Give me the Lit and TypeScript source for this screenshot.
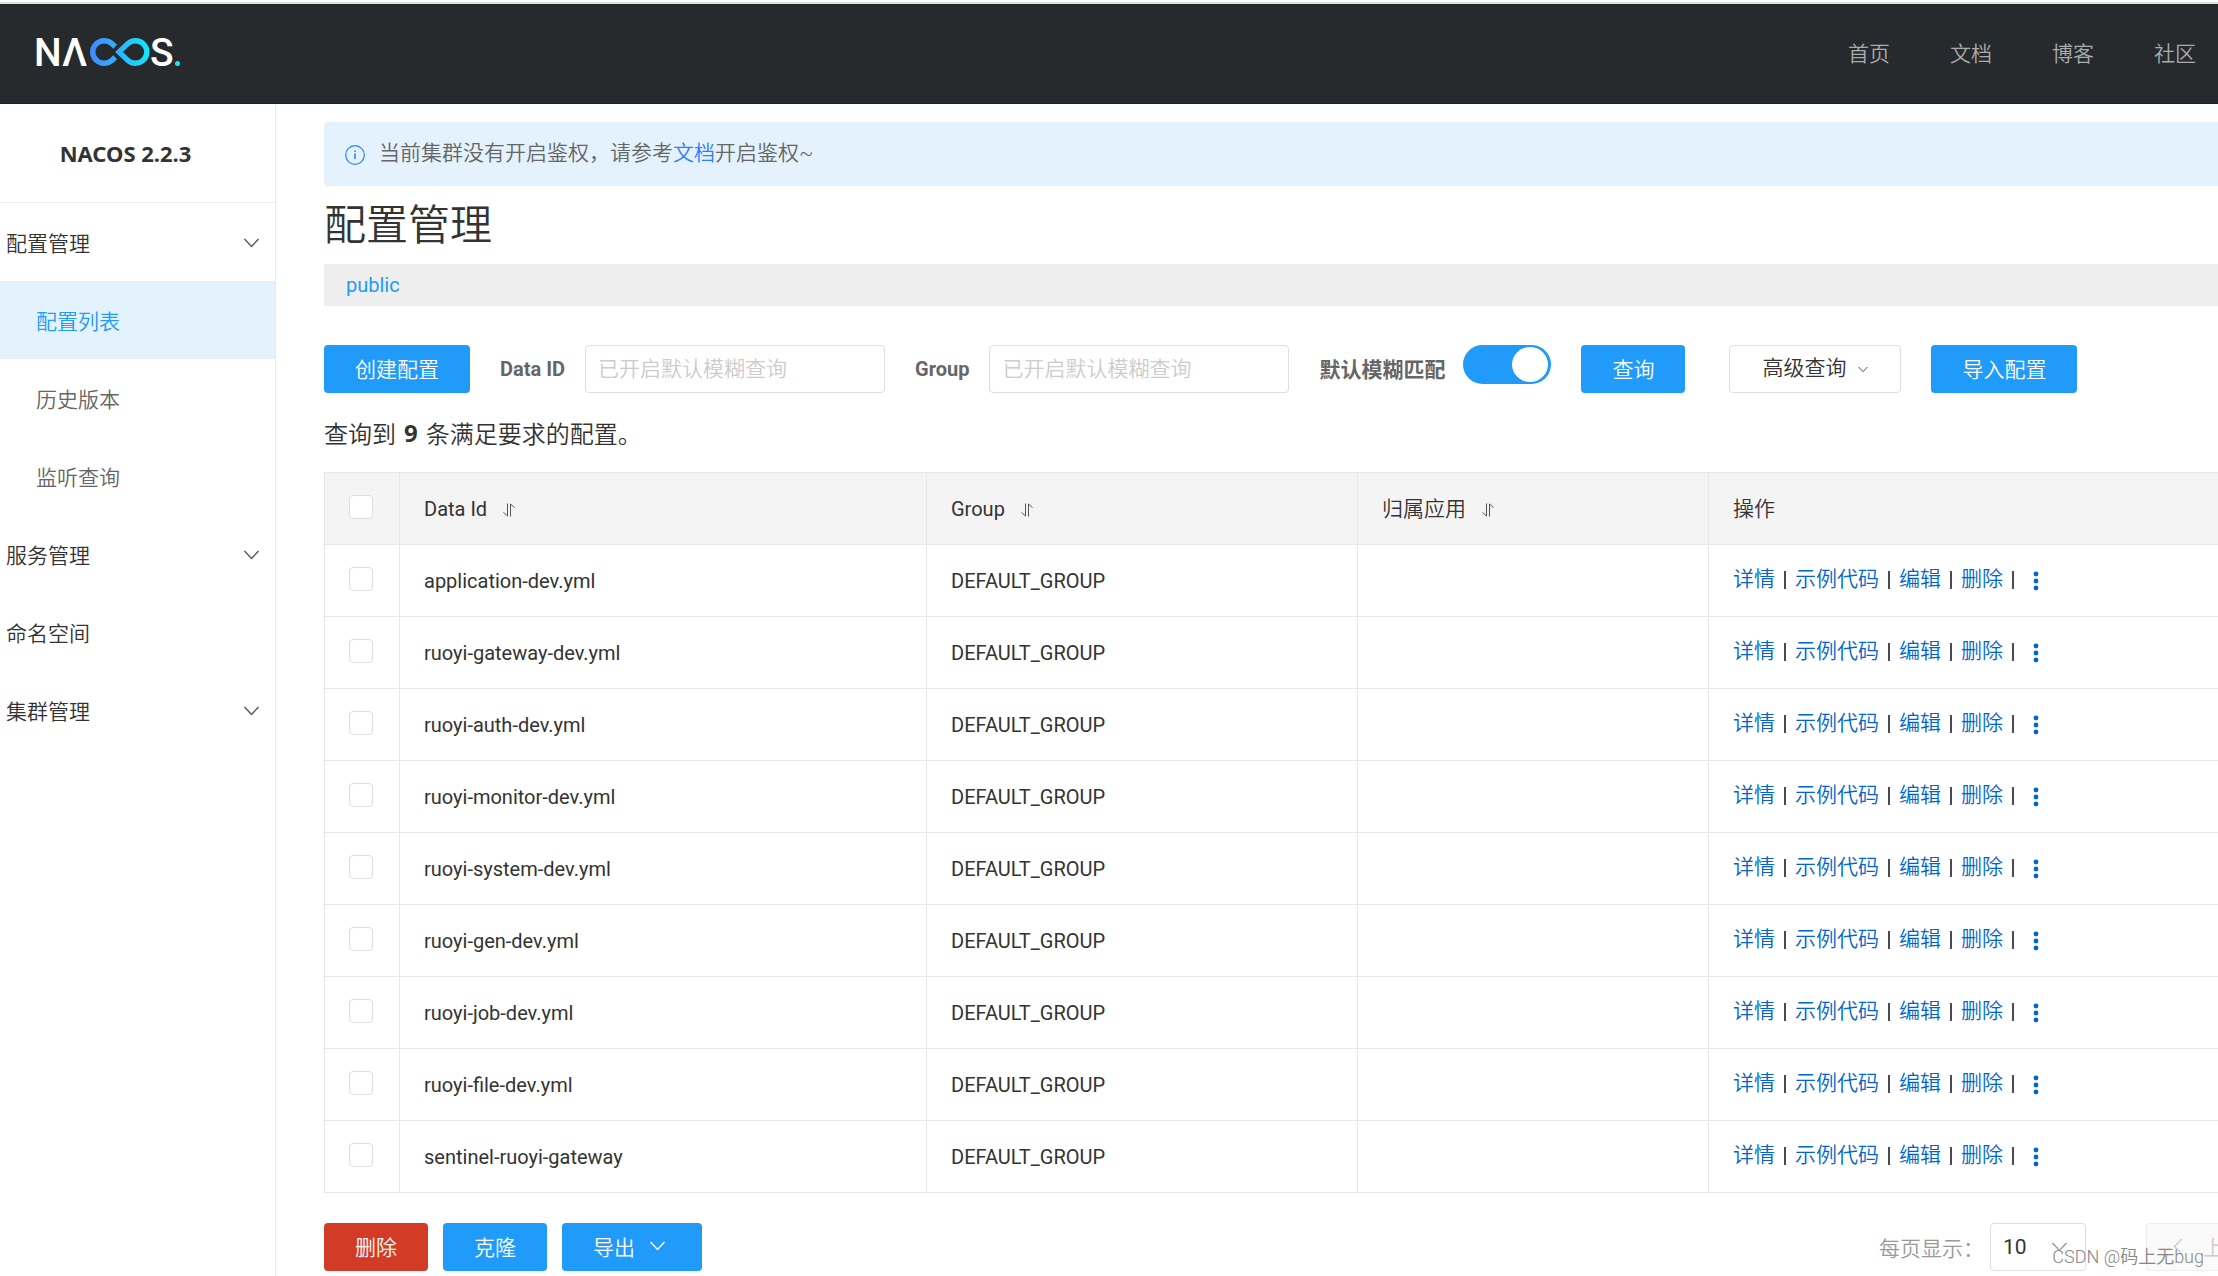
import { LitElement, html, css, svg } from "lit";
import { customElement, property, state } from "lit/decorators.js";
import { classMap } from "lit/directives/class-map.js";

const chevronDown = (size: string) => html`
  <svg class="chevron ${size}" viewBox="0 0 16 10" aria-hidden="true">
    <path d="M1 1 L8 8.5 L15 1" fill="none" stroke="currentColor" stroke-width="1.4" />
  </svg>
`;

const sortIcon = html`
  <svg class="sort" viewBox="0 0 12 14" aria-hidden="true">
    <path d="M0.5 9.5 L4.5 13 V0.5 M7.5 13.5 V1 L11.5 4.5" fill="none" stroke="currentColor" stroke-width="1" />
  </svg>
`;

const dots = [3, 10, 17].map((y) => svg`<circle cx="3" cy=${y} r="2.4" />`);

interface MenuEntry {
  label: string;
  expandable?: boolean;
  child?: boolean;
  active?: boolean;
}

const MENU: MenuEntry[] = [
  { label: "配置管理", expandable: true },
  { label: "配置列表", child: true, active: true },
  { label: "历史版本", child: true },
  { label: "监听查询", child: true },
  { label: "服务管理", expandable: true },
  { label: "命名空间" },
  { label: "集群管理", expandable: true },
];

const CONFIGS = [
  "application-dev.yml",
  "ruoyi-gateway-dev.yml",
  "ruoyi-auth-dev.yml",
  "ruoyi-monitor-dev.yml",
  "ruoyi-system-dev.yml",
  "ruoyi-gen-dev.yml",
  "ruoyi-job-dev.yml",
  "ruoyi-file-dev.yml",
  "sentinel-ruoyi-gateway",
];

@customElement("nacos-header")
class NacosHeader extends LitElement {
  static styles = css`
    :host {
      display: block;
      border-top: 2px solid #fff;
    }
    .bar {
      display: flex;
      align-items: center;
      justify-content: space-between;
      box-sizing: border-box;
      height: 102px;
      padding: 0 22px 0 36px;
      background: #262a2d;
      border-top: 2px solid #dfe3dd;
      border-bottom: 1px solid #231d26;
    }
    .logo {
      display: block;
      width: 144px;
      height: 28px;
      overflow: visible;
      margin-bottom: 4px;
    }
    .wordmark {
      font: 500 39px Roboto, sans-serif;
      fill: #fff;
    }
    nav {
      display: flex;
      gap: 60px;
    }
    .link {
      color: #a9abac;
      font-size: 21px;
      line-height: 32px;
      text-decoration: none;
    }
  `;

  render() {
    return html`
      <header class="bar">
        <svg class="logo" viewBox="0 0 144 28" role="img" aria-label="NACOS.">
          <defs>
            <linearGradient id="loop" gradientUnits="userSpaceOnUse" x1="54" y1="0" x2="113" y2="0">
              <stop offset="0" stop-color="#4289ff" />
              <stop offset="0.5" stop-color="#2fb4fb" />
              <stop offset="1" stop-color="#14e6f6" />
            </linearGradient>
          </defs>
          <text class="wordmark" x="-2" y="28">N</text>
          <text class="wordmark" x="26" y="28">Λ</text>
          <path
            d="M79.2 8.8 L76 5.7 A11.5 11.3 0 1 0 76 22.3 L79.2 19.2"
            fill="none" stroke="url(#loop)" stroke-width="5.4"
          />
          <path
            d="M83 14 L91.5 5.9 A11.4 11.3 0 1 1 91.5 22.1 Z"
            fill="none" stroke="url(#loop)" stroke-width="5.4"
          />
          <text class="wordmark" x="114" y="28">S</text>
          <circle cx="141.5" cy="25.5" r="2.5" fill="#14e6f6" />
        </svg>
        <nav>
          ${["首页", "文档", "博客", "社区"].map((t) => html`<a class="link" href="#">${t}</a>`)}
        </nav>
      </header>
    `;
  }
}

@customElement("nacos-sidebar")
class NacosSidebar extends LitElement {
  static styles = css`
    :host {
      display: block;
      box-sizing: border-box;
      border-right: 1px solid #ebecec;
      color: #333;
    }
    .title {
      margin: 0;
      padding-right: 24px;
      border-bottom: 1px solid #eee;
      font: 700 22px/98px "Noto Sans", "Noto Sans CJK SC", sans-serif;
      text-align: center;
    }
    .list {
      list-style: none;
      margin: 0;
      padding: 0;
    }
    .item {
      display: flex;
      align-items: center;
      justify-content: space-between;
      height: 78px;
      padding: 0 15px 0 6px;
      color: inherit;
      font-size: 21px;
      text-decoration: none;
    }
    .child {
      padding-left: 36px;
      color: #666;
    }
    .active {
      background: #e4f2fe;
      color: #209bfa;
    }
    .chevron {
      width: 17px;
      height: 10px;
      margin-top: 2px;
      color: #555;
    }
  `;

  render() {
    return html`
      <h2 class="title">NACOS 2.2.3</h2>
      <ul class="list">
        ${MENU.map(
          (m) => html`
            <li>
              <a href="#" class=${classMap({ item: true, child: !!m.child, active: !!m.active })}>
                <span>${m.label}</span>${m.expandable ? chevronDown("") : ""}
              </a>
            </li>
          `,
        )}
      </ul>
    `;
  }
}

@customElement("config-table")
class ConfigTable extends LitElement {
  @property({ attribute: false }) rows: string[] = [];

  static styles = css`
    :host {
      display: block;
      color: #333;
      font-size: 20px;
    }
    table {
      width: 100%;
      table-layout: fixed;
      border-collapse: collapse;
    }
    .c-check {
      width: 75px;
    }
    .c-id {
      width: 527px;
    }
    .c-group {
      width: 431px;
    }
    .c-app {
      width: 351px;
    }
    th,
    td {
      box-sizing: border-box;
      height: 72px;
      padding: 0 24px;
      border: 1px solid #e6e7eb;
      border-right-width: 0;
      font-weight: 400;
      text-align: left;
      line-height: 32px;
    }
    th {
      background: #f4f4f4;
    }
    .cjk {
      font-size: 21px;
      font-weight: 350;
    }
    .box {
      appearance: none;
      display: block;
      width: 24px;
      height: 24px;
      margin: 0 0 4px;
      background: #fff;
      border: 1px solid #dcdee3;
      border-radius: 4px;
    }
    .box:checked {
      background: #209bfa;
    }
    .sort {
      width: 12px;
      height: 14px;
      margin-left: 11px;
      vertical-align: -1px;
      color: #555;
    }
    .ops {
      display: flex;
      align-items: center;
      gap: 9px;
      font-size: 21px;
      font-weight: 350;
    }
    .op {
      padding-bottom: 4px;
      color: #06c;
      text-decoration: none;
    }
    .rule {
      width: 2px;
      height: 18px;
      margin-bottom: 2px;
      background: #4a4a50;
    }
    .more {
      display: flex;
      margin-left: 10px;
      padding: 0;
      border: 0;
      background: none;
      fill: #06c;
    }
    .dots {
      width: 6px;
      height: 20px;
    }
  `;

  render() {
    return html`
      <table>
        <colgroup>
          <col class="c-check" /><col class="c-id" /><col class="c-group" /><col class="c-app" /><col />
        </colgroup>
        <thead>
          <tr>
            <th><input class="box" type="checkbox" aria-label="全选" /></th>
            <th>Data Id ${sortIcon}</th>
            <th>Group ${sortIcon}</th>
            <th class="cjk">归属应用 ${sortIcon}</th>
            <th class="cjk">操作</th>
          </tr>
        </thead>
        <tbody>
          ${this.rows.map(
            (id) => html`
              <tr>
                <td><input class="box" type="checkbox" aria-label=${id} /></td>
                <td>${id}</td>
                <td>DEFAULT_GROUP</td>
                <td></td>
                <td>
                  <div class="ops">
                    ${["详情", "示例代码", "编辑", "删除"].map(
                      (t) => html`<a class="op" href="#">${t}</a><span class="rule"></span>`,
                    )}
                    <button class="more" aria-label="更多">
                      <svg class="dots" viewBox="0 0 6 20">${dots}</svg>
                    </button>
                  </div>
                </td>
              </tr>
            `,
          )}
        </tbody>
      </table>
    `;
  }
}

@customElement("app-root")
class AppRoot extends LitElement {
  @state() private fuzzy = true;

  static styles = css`
    :host {
      display: flex;
      flex-direction: column;
      position: relative;
      min-height: 100vh;
      overflow: hidden;
      background: #fff;
      color: #333;
      font-family: Roboto, "Noto Sans CJK SC", sans-serif;
      font-weight: 350;
      font-size: 21px;
    }
    .body {
      display: flex;
      flex: 1;
    }
    .side {
      flex: 0 0 276px;
    }
    .main {
      flex: 1;
      min-width: 0;
      padding: 18px 0 4px 48px;
    }
    .notice {
      display: flex;
      align-items: center;
      gap: 14px;
      height: 64px;
      padding-left: 21px;
      background: #e4f2fe;
      border-radius: 4px 0 0 4px;
      color: #666;
    }
    .notice p {
      margin: 0 0 6px;
    }
    .info {
      width: 20px;
      height: 20px;
      margin-top: 2px;
    }
    .doc {
      color: #2a7fff;
      text-decoration: none;
    }
    .heading {
      margin: 0;
      padding-top: 2px;
      font-size: 42px;
      font-weight: 350;
      line-height: 76px;
    }
    .spaces {
      display: flex;
      align-items: center;
      height: 42px;
      padding-left: 22px;
      background: #eee;
    }
    .space {
      color: #209bfa;
      font-size: 20px;
      font-weight: 400;
      text-decoration: none;
    }
    .tools {
      display: flex;
      align-items: center;
      margin-top: 39px;
    }
    .btn {
      box-sizing: border-box;
      display: inline-flex;
      flex: none;
      align-items: center;
      justify-content: center;
      height: 48px;
      padding: 0 30px 2px;
      border: 1px solid transparent;
      border-radius: 4px;
      background: #209bfa;
      color: #fff;
      font: inherit;
      white-space: nowrap;
    }
    .wide {
      width: 146px;
    }
    .danger {
      background: #d23c26;
    }
    .plain {
      width: 172px;
      margin: 0 30px 0 44px;
      padding-bottom: 6px;
      gap: 12px;
      background: #fff;
      border-color: #dcdee3;
      color: #333;
    }
    .label {
      flex: none;
      margin-left: 30px;
      color: #666;
      font-size: 20px;
      font-weight: 700;
    }
    .cjk {
      padding-bottom: 2px;
      font-size: 21px;
    }
    .field {
      box-sizing: border-box;
      width: 300px;
      height: 48px;
      margin-left: 20px;
      padding: 0 12px;
      border: 1px solid #dcdee3;
      border-radius: 4px;
      background: #fff;
      color: #333;
      font: inherit;
    }
    .field::placeholder {
      color: #ccc;
      opacity: 1;
    }
    .switch {
      appearance: none;
      flex: none;
      display: flex;
      box-sizing: border-box;
      width: 88px;
      height: 39px;
      margin: 0 30px 9px 18px;
      padding: 2px 3px;
      border-radius: 20px;
      background: #ccc;
    }
    .switch::before {
      content: "";
      width: 36px;
      height: 35px;
      border-radius: 50%;
      background: #fff;
    }
    .switch:checked {
      justify-content: flex-end;
      background: #209bfa;
    }
    .count {
      display: flex;
      align-items: center;
      gap: 8px;
      height: 79px;
      margin: 0;
      font-size: 24px;
    }
    .count strong {
      font-family: "Noto Sans", sans-serif;
      font-weight: 700;
    }
    .chevron {
      width: 17px;
      height: 10px;
    }
    .small {
      width: 10px;
      height: 7px;
      margin-top: 6px;
    }
    .foot {
      display: flex;
      align-items: center;
      gap: 15px;
      margin-top: 30px;
    }
    .export {
      justify-content: flex-start;
      width: 140px;
      gap: 14px;
    }
    .pager {
      display: flex;
      align-items: center;
      margin-left: auto;
      color: #999;
    }
    .picker {
      display: grid;
      align-items: center;
      margin: 0 60px 0 6px;
    }
    .size {
      grid-area: 1 / 1;
      appearance: none;
      box-sizing: border-box;
      width: 96px;
      height: 48px;
      padding: 0 12px;
      border: 1px solid #dcdee3;
      border-radius: 4px;
      background: #fff;
      color: #333;
      font: inherit;
      font-weight: 400;
    }
    .picker .chevron {
      grid-area: 1 / 1;
      justify-self: end;
      margin-right: 18px;
      pointer-events: none;
    }
    .prev {
      justify-content: flex-start;
      width: 72px;
      padding: 0 0 2px 26px;
      gap: 20px;
      overflow: hidden;
      border-color: #eee;
      border-right: 0;
      border-radius: 4px 0 0 4px;
      background: #fafafa;
      color: #ccc;
    }
    .left {
      flex: none;
      width: 10px;
      height: 17px;
    }
    .credit {
      position: absolute;
      right: 14px;
      bottom: 4px;
      color: #868686;
      font-size: 18px;
      line-height: 30px;
      pointer-events: none;
      text-shadow: 0 0 2px #fff;
    }
  `;

  private toggle(e: Event) {
    this.fuzzy = (e.target as HTMLInputElement).checked;
  }

  render() {
    return html`
      <nacos-header></nacos-header>
      <div class="body">
        <nacos-sidebar class="side"></nacos-sidebar>
        <main class="main">
          <div class="notice">
            <svg class="info" viewBox="0 0 20 20" fill="none" stroke="#2a7fff" aria-hidden="true">
              <circle cx="10" cy="10" r="9.3" stroke-width="1.2" />
              <path d="M10 8.5 V14" stroke-width="1.6" />
              <path d="M10 5.5 V7" stroke-width="1.6" />
            </svg>
            <p>当前集群没有开启鉴权，请参考<a class="doc" href="#">文档</a>开启鉴权~</p>
          </div>
          <h1 class="heading">配置管理</h1>
          <div class="spaces"><a class="space" href="#">public</a></div>

          <div class="tools">
            <button class="btn wide">创建配置</button>
            <label class="label" for="data-id">Data ID</label>
            <input class="field" id="data-id" placeholder="已开启默认模糊查询" />
            <label class="label" for="group">Group</label>
            <input class="field" id="group" placeholder="已开启默认模糊查询" />
            <label class="label cjk" for="fuzzy">默认模糊匹配</label>
            <input class="switch" id="fuzzy" type="checkbox" role="switch" .checked=${this.fuzzy} @change=${this.toggle} />
            <button class="btn">查询</button>
            <button class="btn plain">高级查询 ${chevronDown("small")}</button>
            <button class="btn wide">导入配置</button>
          </div>

          <p class="count">
            <span>查询到</span><strong>${CONFIGS.length}</strong><span>条满足要求的配置。</span>
          </p>

          <config-table .rows=${CONFIGS}></config-table>

          <div class="foot">
            <button class="btn danger">删除</button>
            <button class="btn">克隆</button>
            <button class="btn export">导出 ${chevronDown("")}</button>
            <div class="pager">
              <label for="size">每页显示：</label>
              <div class="picker">
                <select class="size" id="size">
                  <option>10</option>
                  <option>20</option>
                  <option>50</option>
                </select>
                ${chevronDown("")}
              </div>
              <button class="btn prev" disabled>
                <svg class="left" viewBox="0 0 10 17" aria-hidden="true">
                  <path d="M9 1 L1.5 8.5 L9 16" fill="none" stroke="currentColor" stroke-width="1.5" />
                </svg>
                上一页
              </button>
            </div>
          </div>
        </main>
      </div>
      <div class="credit">CSDN @码上无bug</div>
    `;
  }
}
